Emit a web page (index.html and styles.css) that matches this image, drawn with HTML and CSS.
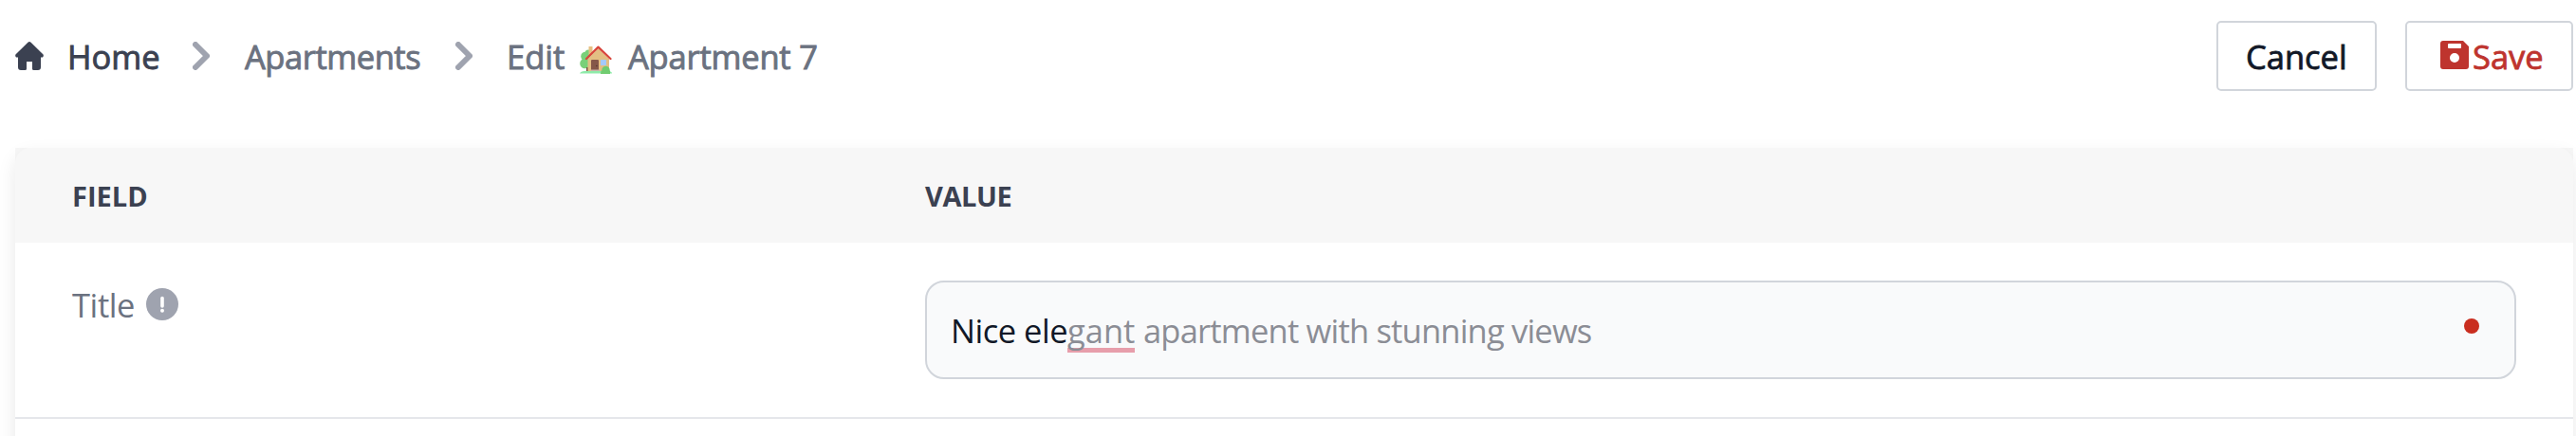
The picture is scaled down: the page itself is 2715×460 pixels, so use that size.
FILE: index.html
```
<!DOCTYPE html>
<html lang="en">
<head>
<meta charset="utf-8">
<title>Edit Apartment 7</title>
<link rel="stylesheet" href="styles.css">
</head>
<body>
<header class="topbar">
  <nav class="crumbs">
    <svg class="home-icon" viewBox="0 0 30 30"><path d="M13.4.7Q15-.6 16.600.7L29.300 13.200Q30.500 14.500 29 16.500H27V27Q27 30 24 30H19.500Q18 30 18 28.500V21H12V28.500Q12 30 10.500 30H6Q3 30 3 27V16.500H1Q-.5 14.500.7 13.200Z"/></svg>
    <a class="crumb crumb-home">Home</a>
    <svg class="chevron" viewBox="0 0 18 30"><path d="M3 3 15 15 3 27"/></svg>
    <a class="crumb crumb-list">Apartments</a>
    <svg class="chevron" viewBox="0 0 18 30"><path d="M3 3 15 15 3 27"/></svg>
    <span class="crumb crumb-edit">Edit</span>
    <svg class="house" viewBox="0 0 34 30">
      <path fill="#c49a5e" d="M7.500 22h2v6h-2z"/>
      <circle cx="5.500" cy="19" r="5.300" fill="#79d079"/><circle cx="6" cy="11.500" r="4.800" fill="#79d079"/><circle cx="9" cy="8" r="3.500" fill="#79d079"/>
      <path fill="#7d5147" d="M7 23h2v4H7z"/>
      <rect x="9.500" y="1" width="4" height="9" fill="#e6bf82"/>
      <path fill="#e3be83" d="M8.500 14 19.500 3 31 14V27H8.500z"/>
      <path fill="none" stroke="#d8453c" stroke-width="2.200" stroke-linecap="round" stroke-linejoin="round" d="M7 14 19.500 1.600 32.500 14"/>
      <rect x="12" y="15" width="8" height="12" rx="1" fill="#855748"/><circle cx="17.800" cy="21.500" r=".8" fill="#553830"/>
      <rect x="22" y="15" width="6" height="6" fill="#a5c9fb"/>
      <path fill="#c9b5aa" d="M12 25.500h9v2h-9z"/>
      <path fill="#8eeba9" d="M0 29.500Q1 27 5 27H30Q34 27 34 29.500z"/>
      <circle cx="27.500" cy="26" r="4.200" fill="#71cc70"/><path fill="#71cc70" d="M22.500 26.500H32V30H22z"/>
    </svg>
    <span class="crumb crumb-name">Apartment 7</span>
  </nav>
  <div class="actions">
    <button class="btn btn-cancel"><span>Cancel</span></button>
    <button class="btn btn-save"><svg class="save-icon" viewBox="0 0 30 30"><path fill-rule="evenodd" d="M3 0H24L30 6V27Q30 30 27 30H3Q0 30 0 27V3Q0 0 3 0ZM9 3Q8 3 8 4V7Q8 8 9 8H21Q22 8 22 7V4Q22 3 21 3ZM15 13A5 5 0 1 0 15 23A5 5 0 1 0 15 13Z"/></svg><span>Save</span></button>
  </div>
</header>
<main class="card">
  <div class="row row-head">
    <div class="cell-field head-field">FIELD</div>
    <div class="head-value">VALUE</div>
  </div>
  <div class="row row-body">
    <div class="cell-field label"><span class="label-text">Title</span><svg class="info" viewBox="0 0 34 34"><circle cx="17" cy="17" r="17" fill="#9fa3af"/><path d="M17 10.500V19" stroke="#fff" stroke-width="3.600" stroke-linecap="round"/><circle cx="17" cy="23.700" r="2" fill="#fff"/></svg></div>
    <div class="input"><span class="typed">Nice ele</span><span class="hint"><span class="marked">gant</span><span class="rest">apartment with stunning views</span></span><i class="dot"></i></div>
  </div>
</main>
</body>
</html>
```
FILE: styles.css
```
* { box-sizing: border-box; }
body {
  margin: 0;
  height: 460px;
  overflow: hidden;
  background: #fff;
  font: 34.5px/48px "Open Sans", "Noto Sans", sans-serif;
  color: #111827;
}
.topbar {
  display: flex;
  justify-content: space-between;
  height: 156px;
  padding: 22px 3px 0 16px;
}
.crumbs { display: flex; align-items: center; height: 74px; font-weight: 500; color: #6b7280; }
.crumb { white-space: nowrap; padding-top: 2px; -webkit-text-stroke: 0.9px currentColor; }
.home-icon { width: 30px; height: 30px; fill: #3b4151; }
.crumb-home { margin-left: 25px; width: 132px; color: #3b4151; }
.chevron { width: 18px; height: 30px; fill: none; stroke: #9fa3af; stroke-width: 6; stroke-linecap: round; stroke-linejoin: round; }
.crumb-list { margin-left: 37px; width: 222px; letter-spacing: -0.45px; }
.crumb-edit { margin-left: 36px; width: 77px; }
.house { width: 34px; height: 30px; margin-top: 8px; }
.crumb-name { margin-left: 17px; letter-spacing: -0.2px; }

.actions { display: flex; gap: 30px; }
.btn {
  display: flex;
  align-items: center;
  height: 74px;
  padding: 0 0 0 29px;
  border: 2px solid #d1d5db;
  border-radius: 5px;
  background: #fff;
  color: #111827;
  font: inherit;
  font-weight: 500;
  -webkit-text-stroke: 0.8px currentColor;
}
.btn span { padding-top: 2px; }
.btn-cancel { width: 169px; }
.btn-save { width: 177px; padding-left: 35px; gap: 4px; color: #be342e; }
.save-icon { width: 30px; height: 30px; fill: #be342e; stroke: none; margin-top: -2px; }

.card {
  width: 2696px;
  height: 600px;
  margin-left: 16px;
  border-radius: 16px;
  background: #fff;
  box-shadow: 0 8px 20px rgba(0, 0, 0, 0.09);
}
.row { display: flex; padding-left: 60px; }
.cell-field { width: 899px; }
.row-head {
  height: 100px;
  align-items: center;
  background: rgba(0, 0, 0, 0.032);
  color: #3b4151;
  font-size: 29px;
  font-weight: 700;
}
.head-field, .head-value { padding-top: 2px; }
.head-value { letter-spacing: -0.4px; }
.row-body { height: 186px; padding-top: 40px; border-bottom: 2px solid #e5e7eb; }
.label { display: flex; align-items: flex-start; padding-top: 2px; color: #6b7280; }
.label-text { width: 78px; letter-spacing: -0.4px; }
.info { width: 34px; height: 34px; margin-top: 6px; }
.input {
  display: flex;
  align-items: center;
  position: relative;
  width: 1677px;
  height: 104px;
  padding: 2px 0 0 25px;
  border: 2px solid #d1d5db;
  border-radius: 20px;
  background: #f9fafb;
  white-space: nowrap;
}
.typed { width: 123px; letter-spacing: -0.5px; }
.hint { display: flex; color: #8b8d95; }
.marked {
  width: 71px;
  margin-right: 9px;
  background: linear-gradient(#e79eab, #e79eab) 0 42px / 71px 5px no-repeat;
}
.rest { letter-spacing: -0.8px; }
.dot {
  position: absolute;
  right: 37px;
  top: 38px;
  width: 16px;
  height: 16px;
  border-radius: 50%;
  background: #c92d1f;
}
```
